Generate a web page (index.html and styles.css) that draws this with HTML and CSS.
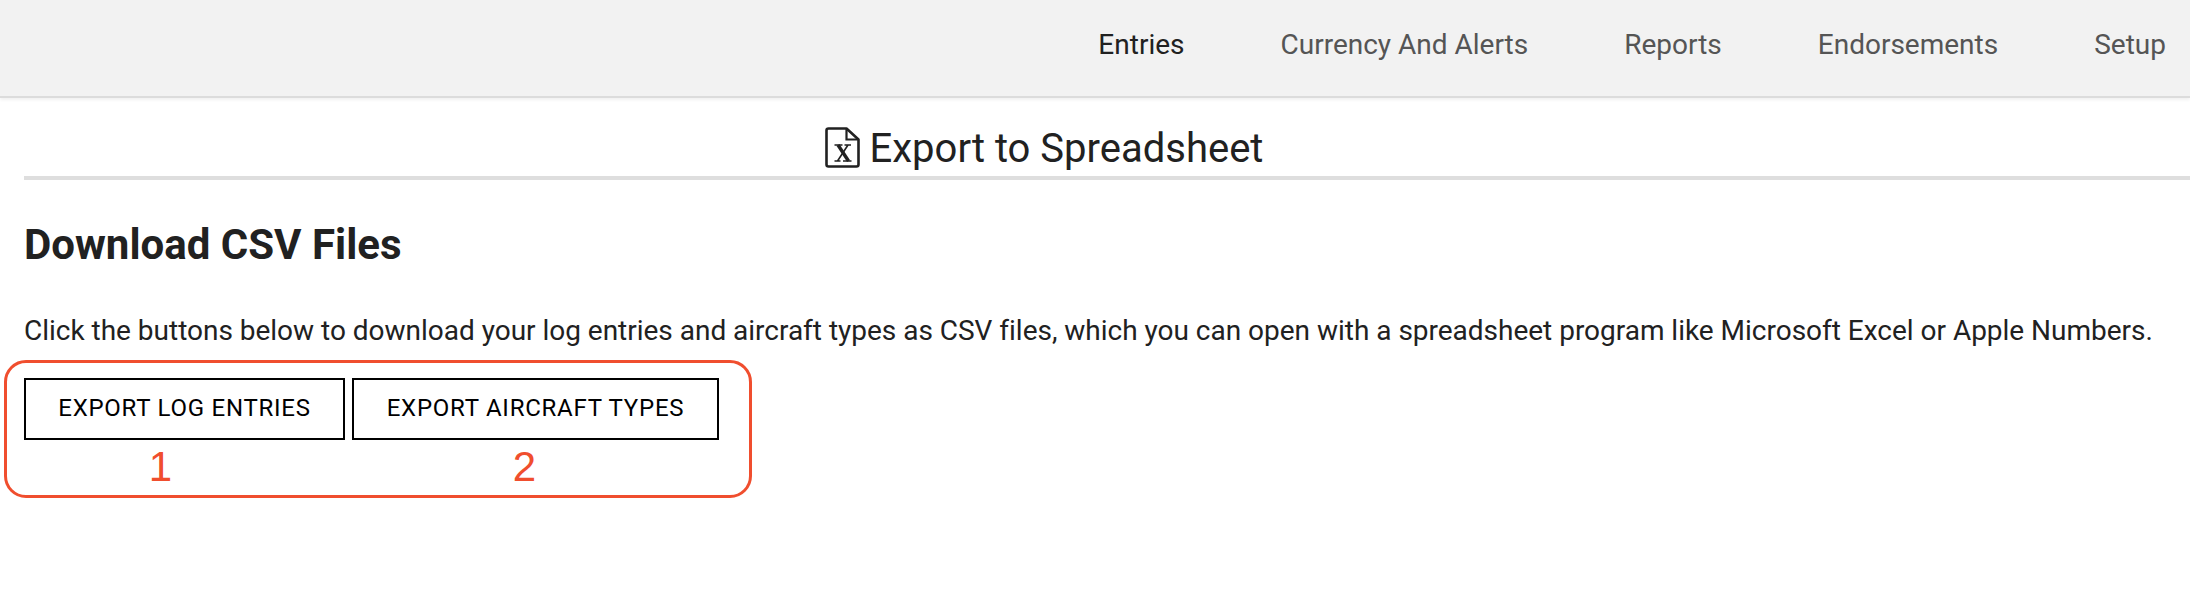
FILE: index.html
```html
<!DOCTYPE html>
<html lang="en">
<head>
<meta charset="utf-8">
<title>Export to Spreadsheet</title>
<link rel="stylesheet" href="styles.css">
</head>
<body>
<header class="topbar">
  <nav class="nav">
    <a class="nav-link active">Entries</a>
    <a class="nav-link">Currency And Alerts</a>
    <a class="nav-link">Reports</a>
    <a class="nav-link">Endorsements</a>
    <a class="nav-link">Setup</a>
  </nav>
</header>
<main class="content">
  <div class="title-row">
    <svg class="file-icon" viewBox="0 0 35 41" width="35" height="41" aria-hidden="true">
      <path d="M3.500 1.500H21.500L33.500 12.500V37.500Q33.500 39.500 31.500 39.500H3.500Q1.500 39.500 1.500 37.500V3.500Q1.500 1.500 3.500 1.500Z" fill="none" stroke="#212121" stroke-width="2.600" stroke-linejoin="round"/>
      <path d="M21.500 1.500V12.500H33.500" fill="none" stroke="#212121" stroke-width="2.200"/>
      <path d="M9.500 18H17.500M19.500 18H26M9.500 34H15.500M18 34H26.500M23 18L12.500 34" fill="none" stroke="#212121" stroke-width="1.600"/>
      <path d="M13 18L23.500 34" fill="none" stroke="#212121" stroke-width="3.400"/>
    </svg>
    <h1 class="title">Export to Spreadsheet</h1>
  </div>
  <h2 class="heading">Download CSV Files</h2>
  <p class="lead">Click the buttons below to download your log entries and aircraft types as CSV files, which you can open with a spreadsheet program like Microsoft Excel or Apple Numbers.</p>
  <div class="actions">
    <div class="callout"></div>
    <div class="action">
      <button class="btn btn-log">EXPORT LOG ENTRIES</button>
      <span class="num num-one">1</span>
    </div>
    <div class="action">
      <button class="btn btn-air">EXPORT AIRCRAFT TYPES</button>
      <span class="num num-two">2</span>
    </div>
  </div>
</main>
</body>
</html>
```

FILE: styles.css
```css
* { box-sizing: border-box; }
html, body { margin: 0; padding: 0; background: #fff; }
body { font-family: Roboto, "Liberation Sans", sans-serif; color: #212121; overflow: hidden; height: 609px; }
.topbar {
  height: 98px;
  background: #f2f2f2;
  border-bottom: 2px solid #dcdcdc;
  box-shadow: 0 2px 3px rgba(0,0,0,.06);
  display: flex;
  justify-content: flex-end;
  align-items: flex-start;
  padding: 27px 24px 0 0;
}
.nav { display: flex; gap: 96px; }
.nav-link { font-size: 28px; line-height: 36px; color: #555; }
.nav-link.active { color: #212121; }
.content { padding: 0 0 0 24px; }
.title-row {
  height: 82px;
  border-bottom: 4px solid #dedede;
  display: flex;
  justify-content: center;
  align-items: flex-start;
  gap: 10px;
  padding: 29px 126px 0 0;
}
.file-icon { flex: none; }
.title { margin: 0; font-size: 40px; line-height: 44px; font-weight: 400; color: #212121; }
.heading { margin: 41px 0 0; font-size: 42px; line-height: 48px; font-weight: 700; color: #212121; }
.lead { margin: 44px 0 0; font-size: 28px; line-height: 36px; color: #212121; white-space: nowrap; letter-spacing: -.015px; }
.actions { position: relative; display: flex; gap: 7px; margin-top: 29px; }
.callout {
  position: absolute;
  left: -20px; top: -18px;
  width: 748px; height: 138px;
  border: 3px solid #f04e2e;
  border-radius: 22px;
}
.action { display: flex; flex-direction: column; align-items: center; }
.btn {
  height: 62px;
  background: #fff;
  border: 2px solid #000;
  border-radius: 0;
  font-family: inherit;
  font-size: 24px;
  letter-spacing: .75px;
  color: #000;
  padding: 0 0 2px;
}
.btn-log { width: 321px; }
.btn-air { width: 367px; }
.num { font-family: "Liberation Sans", sans-serif; font-size: 42px; line-height: 48px; color: #f04e2e; margin-top: 3px; }
.num-one { margin-right: 48px; }
.num-two { margin-right: 22px; }
```
